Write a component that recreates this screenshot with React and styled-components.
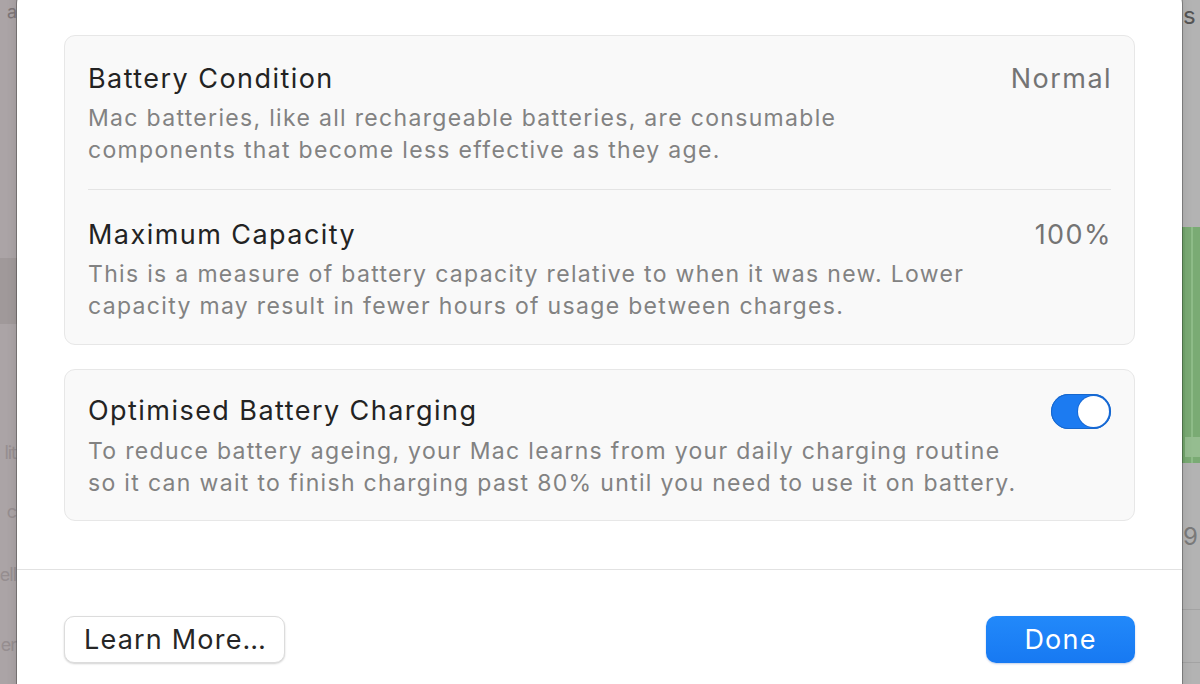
import React from 'react';
import styled, { createGlobalStyle } from 'styled-components';

const GlobalStyle = createGlobalStyle`
  html, body {
    margin: 0;
    padding: 0;
    height: 100%;
    overflow: hidden;
    background: #b3b3b3;
  }
  #root {
    height: 100%;
  }
  * {
    box-sizing: border-box;
  }
`;

const font = `Inter, "Noto Sans", "Liberation Sans", sans-serif`;

const Desktop = styled.div`
  display: grid;
  grid-template-columns: 17px 1fr 18px;
  height: 684px;
  overflow: hidden;
  font-family: ${font};
`;

/* window behind the sheet, left side (sidebar) */
const Sidebar = styled.div`
  background: #aba4a6;
  overflow: hidden;
  display: flex;
  flex-direction: column;
  font-size: 18px;
  white-space: nowrap;
`;

const SideRow = styled.div`
  height: ${p => p.h}px;
  flex-shrink: 0;
  display: flex;
  align-items: center;
  justify-content: flex-end;
  padding-right: 1px;
  background: ${p => (p.selected ? '#a0999a' : 'transparent')};
  color: ${p => (p.dark ? '#7d7577' : '#968e90')};
  letter-spacing: -1px;
  line-height: 20px;
`;

/* window behind the sheet, right side (chart) */
const ChartEdge = styled.div`
  background: #b3b3b3;
  overflow: hidden;
  display: flex;
  flex-direction: column;
  font-size: 24px;
`;

const ChartLabel = styled.div`
  height: ${p => p.h}px;
  flex-shrink: 0;
  display: flex;
  align-items: center;
  padding-left: 1px;
  color: ${p => p.color || '#6d6d6d'};
  white-space: nowrap;
  border-bottom: ${p => (p.rule ? '1px solid #a3a3a3' : 'none')};
`;

const GreenBar = styled.div`
  height: ${p => p.h}px;
  flex-shrink: 0;
  background: ${p => (p.light ? '#95bd90' : '#7aab74')};
  border-left: 3px solid #72a56c;
  display: flex;
  padding-left: 6px;
  &::after {
    content: '';
    width: 2px;
    background: ${p => (p.light ? 'transparent' : '#8ebc88')};
  }
`;

const Sheet = styled.div`
  margin-top: -14px;
  height: 720px;
  background: #ffffff;
  border-radius: 18px 18px 0 0;
  box-shadow: 0 0 0 1px rgba(0, 0, 0, 0.28), 0 0 12px rgba(0, 0, 0, 0.12);
  display: flex;
  flex-direction: column;
  position: relative;
  z-index: 1;
`;

const Body = styled.div`
  padding: 49px 47px 0;
  display: flex;
  flex-direction: column;
  gap: 24px;
`;

const Card = styled.section`
  background: #f9f9f9;
  border: 1px solid #e7e7e7;
  border-radius: 11px;
`;

const Row = styled.div`
  margin: 0 23px;
  padding: ${p => p.pad};
  display: grid;
  grid-template-columns: 1fr auto;
  column-gap: 24px;
  & + & {
    border-top: 1px solid #e4e4e4;
  }
`;

const Title = styled.div`
  font-size: 27px;
  line-height: 34px;
  color: #232323;
  letter-spacing: 1.45px;
`;

const Value = styled.div`
  font-size: 27px;
  line-height: 34px;
  color: #747474;
  letter-spacing: 1.45px;
  text-align: right;
  margin-right: -1px;
`;

const Description = styled.p`
  grid-column: 1 / -1;
  margin: 6px 0 0;
  font-size: 23px;
  line-height: 32px;
  color: #828282;
  letter-spacing: 1.32px;
  white-space: nowrap;
`;

const Toggle = styled.div`
  align-self: center;
  width: 60px;
  height: 35px;
  border-radius: 18px;
  background: #1c7bf1;
  box-shadow: inset 0 0 0 1px #1767cc;
  display: flex;
  align-items: center;
  justify-content: flex-end;
  padding: 2px;
`;

const Knob = styled.div`
  width: 31px;
  height: 31px;
  border-radius: 50%;
  background: #ffffff;
  box-shadow: 0 0 0 1px rgba(20, 90, 190, 0.55);
`;

const Footer = styled.div`
  margin-top: 48px;
  border-top: 1px solid #e2e2e2;
  padding: 46px 47px 0;
  display: flex;
  justify-content: space-between;
`;

const Button = styled.button`
  height: 47px;
  width: ${p => p.w}px;
  border-radius: 10px;
  font-family: ${font};
  font-size: 27px;
  letter-spacing: 1.2px;
  white-space: nowrap;
  padding: 0 ${p => (p.primary ? 0 : 19)}px;
  cursor: pointer;
  background: ${p =>
    p.primary ? 'linear-gradient(#2289fa, #1779f2)' : '#ffffff'};
  color: ${p => (p.primary ? '#ffffff' : '#262626')};
  border: ${p => (p.primary ? 'none' : '1px solid #dcdcdc')};
  box-shadow: ${p =>
    p.primary
      ? '0 1px 2px rgba(0, 60, 160, 0.25)'
      : '0 1px 2px rgba(0, 0, 0, 0.18)'};
  text-align: ${p => (p.primary ? 'center' : 'left')};
`;

const rows = [
  {
    title: 'Battery Condition',
    value: 'Normal',
    pad: '26px 0 23px',
    text: [
      'Mac batteries, like all rechargeable batteries, are consumable',
      'components that become less effective as they age.',
    ],
  },
  {
    title: 'Maximum Capacity',
    value: '100%',
    pad: '28px 0 22px',
    text: [
      'This is a measure of battery capacity relative to when it was new. Lower',
      'capacity may result in fewer hours of usage between charges.',
    ],
  },
];

const sidebarRows = [
  { h: 24, label: 'a', dark: true },
  { h: 234, label: '' },
  { h: 66, label: '', selected: true },
  { h: 100, label: '' },
  { h: 58, label: 'lit' },
  { h: 60, label: 'c' },
  { h: 66, label: 'ell' },
  { h: 74, label: 'er' },
];

export default function App() {
  return (
    <>
      <GlobalStyle />
      <Desktop>
        <Sidebar>
          {sidebarRows.map((r, i) => (
            <SideRow key={i} h={r.h} selected={r.selected} dark={r.dark}>
              {r.label}
            </SideRow>
          ))}
        </Sidebar>

        <Sheet>
          <Body>
            <Card>
              {rows.map(r => (
                <Row key={r.title} pad={r.pad}>
                  <Title>{r.title}</Title>
                  <Value>{r.value}</Value>
                  <Description>
                    {r.text[0]}
                    <br />
                    {r.text[1]}
                  </Description>
                </Row>
              ))}
            </Card>

            <Card>
              <Row pad="24px 0 21px">
                <Title>Optimised Battery Charging</Title>
                <Toggle>
                  <Knob />
                </Toggle>
                <Description>
                  To reduce battery ageing, your Mac learns from your daily charging routine
                  <br />
                  so it can wait to finish charging past 80% until you need to use it on battery.
                </Description>
              </Row>
            </Card>
          </Body>

          <Footer>
            <Button w={221}>Learn More…</Button>
            <Button w={149} primary>Done</Button>
          </Footer>
        </Sheet>

        <ChartEdge>
          <ChartLabel h={30} color="#555">s</ChartLabel>
          <ChartLabel h={197} />
          <GreenBar h={210} />
          <GreenBar h={20} light />
          <GreenBar h={6} />
          <ChartLabel h={147} color="#7a7a7a" rule>9</ChartLabel>
          <ChartLabel h={53} rule />
        </ChartEdge>
      </Desktop>
    </>
  );
}
